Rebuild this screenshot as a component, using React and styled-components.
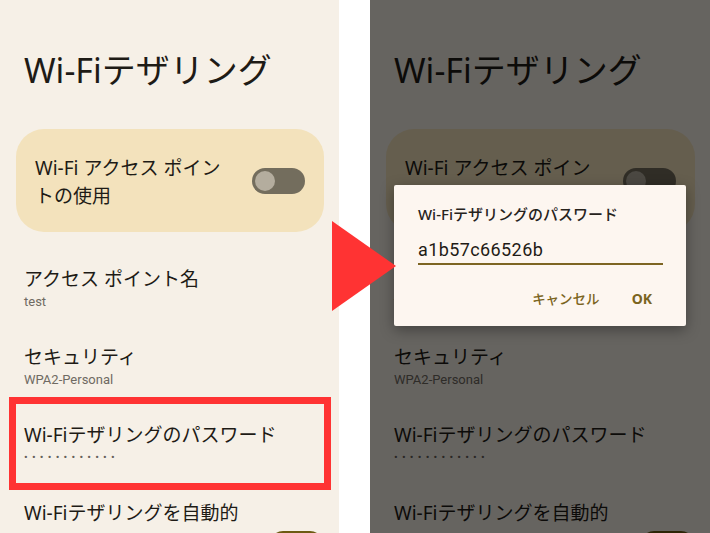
import React from 'react'
import styled, {createGlobalStyle} from 'styled-components'

const GlobalStyle = createGlobalStyle`
  html, body {
    margin: 0;
    padding: 0;
    background: #fff;
  }
  body {
    width: 710px;
    height: 533px;
    overflow: hidden;
    font-family: "Noto Sans", "Noto Sans CJK JP", sans-serif;
  }
`

const Stage = styled.div`
  position: relative;
  display: flex;
  justify-content: space-between;
  width: 710px;
  height: 533px;
  overflow: hidden;
  background: #fff;
`

const Phone = styled.div`
  position: relative;
  width: ${p => p.$width}px;
  height: 533px;
  overflow: hidden;
  background: #f6f0e7;
  display: flex;
  flex-direction: column;
  color: #1e1b16;
`

const Title = styled.h1`
  margin: 50px 0 0 24px;
  font-size: 34px;
  line-height: 40px;
  font-weight: 400;
`

const MainCard = styled.div`
  margin: 39px 15px 0 16px;
  height: 103px;
  flex-shrink: 0;
  box-sizing: border-box;
  border-radius: 28px;
  background: #f3e2bc;
  display: flex;
  align-items: center;
  justify-content: space-between;
  padding: 0 19px;
`

const CardLabel = styled.div`
  max-width: 200px;
  padding-top: 3px;
  font-size: 19px;
  line-height: 28px;
`

const Switch = styled.div`
  position: relative;
  flex-shrink: 0;
  width: 53px;
  height: 26px;
  margin-top: ${p => p.$drop || 0}px;
  border-radius: 13px;
  background: ${p => (p.$on ? '#6d5a12' : '#736d5d')};

  &::after {
    content: '';
    position: absolute;
    top: 3px;
    left: ${p => (p.$on ? '30px' : '3px')};
    width: 20px;
    height: 20px;
    border-radius: 50%;
    background: ${p => (p.$on ? '#fff' : '#b4ad9e')};
  }
`

const List = styled.div`
  margin-top: 19px;
  display: flex;
  flex-direction: column;
`

const Item = styled.div`
  position: relative;
  display: flex;
  align-items: flex-start;
  gap: 4px;
  padding: 16px 16px 18px 24px;

  ${p => p.$highlight && `
    &::after {
      content: '';
      position: absolute;
      top: -10px;
      bottom: -5px;
      left: 9px;
      right: 8px;
      border: 7px solid #ff3333;
    }
  `}
`

const ItemText = styled.div`
  flex: 1;
`

const ItemTitle = styled.div`
  font-size: 19px;
  line-height: 24px;
`

const ItemSub = styled.div`
  margin-top: 2px;
  font-family: Roboto, "Noto Sans CJK JP", sans-serif;
  font-size: 13px;
  line-height: 18px;
  color: #6f6a62;
`

const Dots = styled(ItemSub)`
  font-size: 11px;
  letter-spacing: 4.2px;
  color: #66615a;
`

const Scrim = styled.div`
  position: absolute;
  inset: 0;
  background: rgba(0, 0, 0, 0.585);
`

const Dialog = styled.div`
  position: absolute;
  left: 24px;
  top: 185px;
  width: 292px;
  height: 141px;
  box-sizing: border-box;
  padding: 20px 23px 0 24px;
  background: #fdf6f0;
  border-radius: 2px;
  box-shadow: 0 4px 14px rgba(0, 0, 0, 0.35);
  display: flex;
  flex-direction: column;
`

const DialogTitle = styled.div`
  font-size: 15px;
  line-height: 18px;
  font-weight: 500;
  color: #27231d;
`

const Input = styled.div`
  margin-top: 15px;
  font-family: Roboto, sans-serif;
  font-size: 18px;
  line-height: 24px;
  letter-spacing: 0.4px;
  color: #1f1b16;
  border-bottom: 2px solid #7d6523;
  padding-bottom: 1px;
`

const Actions = styled.div`
  margin-top: 15px;
  display: flex;
  justify-content: flex-end;
  gap: 8px;
  margin-right: -1px;
`

const TextButton = styled.div`
  height: 36px;
  padding: 0 12px;
  display: flex;
  align-items: center;
  font-size: ${p => (p.$bold ? '14px' : '13.5px')};
  font-weight: ${p => (p.$bold ? 700 : 500)};
  color: #7b6420;
`

const Arrow = styled.div`
  position: absolute;
  left: 332px;
  top: 221px;
  width: 0;
  height: 0;
  border-top: 45px solid transparent;
  border-bottom: 45px solid transparent;
  border-left: 64px solid #ff3333;
`

const ITEMS = [
  {title: 'アクセス ポイント名', sub: 'test'},
  {title: 'セキュリティ', sub: 'WPA2-Personal'},
  {title: 'Wi-Fiテザリングのパスワード', dots: true, mark: true}
]

const Screen = ({marked}) => (
  <>
    <Title>Wi-Fiテザリング</Title>
    <MainCard>
      <CardLabel>Wi-Fi アクセス ポイントの使用</CardLabel>
      <Switch />
    </MainCard>
    <List>
      {ITEMS.map(item =>
        <Item key={item.title} $highlight={marked && item.mark}>
          <ItemText>
            <ItemTitle>{item.title}</ItemTitle>
            {item.dots
              ? <Dots>••••••••••••</Dots>
              : <ItemSub>{item.sub}</ItemSub>}
          </ItemText>
        </Item>
      )}
      <Item>
        <ItemText>
          <ItemTitle>Wi-Fiテザリングを自動的</ItemTitle>
        </ItemText>
        <Switch $on $drop={30} />
      </Item>
    </List>
  </>
)

export default function App() {
  return (
    <Stage>
      <GlobalStyle />
      <Phone $width={339}>
        <Screen marked />
      </Phone>
      <Phone $width={340}>
        <Screen />
        <Scrim />
        <Dialog>
          <DialogTitle>Wi-Fiテザリングのパスワード</DialogTitle>
          <Input>a1b57c66526b</Input>
          <Actions>
            <TextButton>キャンセル</TextButton>
            <TextButton $bold>OK</TextButton>
          </Actions>
        </Dialog>
      </Phone>
      <Arrow />
    </Stage>
  )
}
